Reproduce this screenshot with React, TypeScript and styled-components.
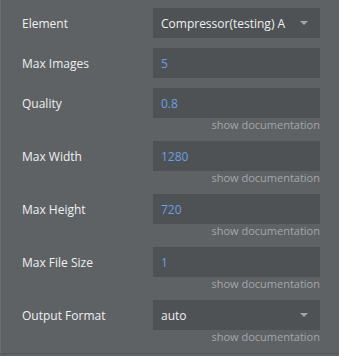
import React from 'react'
import styled, { createGlobalStyle } from 'styled-components'

const GlobalStyle = createGlobalStyle`
  html, body {
    margin: 0;
    padding: 0;
    background: #5e6265;
  }
  body {
    font-family: 'Open Sans', 'Noto Sans', sans-serif;
  }
`

const Panel = styled.div`
  width: 339px;
  height: 354px;
  box-sizing: border-box;
  background: #5e6265;
  border-left: 1px solid #6a6e71;
  border-bottom: 1px solid #54575a;
  padding: 8px 19px 0 20px;
  display: flex;
  flex-direction: column;
  gap: 10px;
`

const Field = styled.div`
  display: flex;
  flex-direction: column;
`

const Row = styled.div`
  display: flex;
  align-items: center;
  height: 30px;
`

const Label = styled.div`
  width: 131px;
  padding-left: 1px;
  font-size: 12px;
  color: #eef0f1;
`

const Box = styled.div<{ $blue?: boolean }>`
  flex: 1;
  height: 30px;
  box-sizing: border-box;
  background: #4f5255;
  display: flex;
  align-items: center;
  justify-content: space-between;
  padding: 0 12px 0 8px;
  font-size: 12px;
  color: ${p => (p.$blue ? '#6b9fe0' : '#eef0f1')};
`

const Caret = styled.span`
  width: 0;
  height: 0;
  border-left: 4px solid transparent;
  border-right: 4px solid transparent;
  border-top: 4px solid #a3a7aa;
`

const Doc = styled.div`
  align-self: flex-end;
  font-size: 11px;
  line-height: 13px;
  color: #a3a7aa;
`

type F = { label: string; value: string; select?: boolean; doc?: boolean }

const fields: F[] = [
  { label: 'Element', value: 'Compressor(testing) A', select: true },
  { label: 'Max Images', value: '5' },
  { label: 'Quality', value: '0.8', doc: true },
  { label: 'Max Width', value: '1280', doc: true },
  { label: 'Max Height', value: '720', doc: true },
  { label: 'Max File Size', value: '1', doc: true },
  { label: 'Output Format', value: 'auto', select: true, doc: true },
]

export default function App() {
  return (
    <>
      <GlobalStyle />
      <Panel>
        {fields.map(f => (
          <Field key={f.label}>
            <Row>
              <Label>{f.label}</Label>
              <Box $blue={!f.select}>
                <span>{f.value}</span>
                {f.select && <Caret />}
              </Box>
            </Row>
            {f.doc && <Doc>show documentation</Doc>}
          </Field>
        ))}
      </Panel>
    </>
  )
}
